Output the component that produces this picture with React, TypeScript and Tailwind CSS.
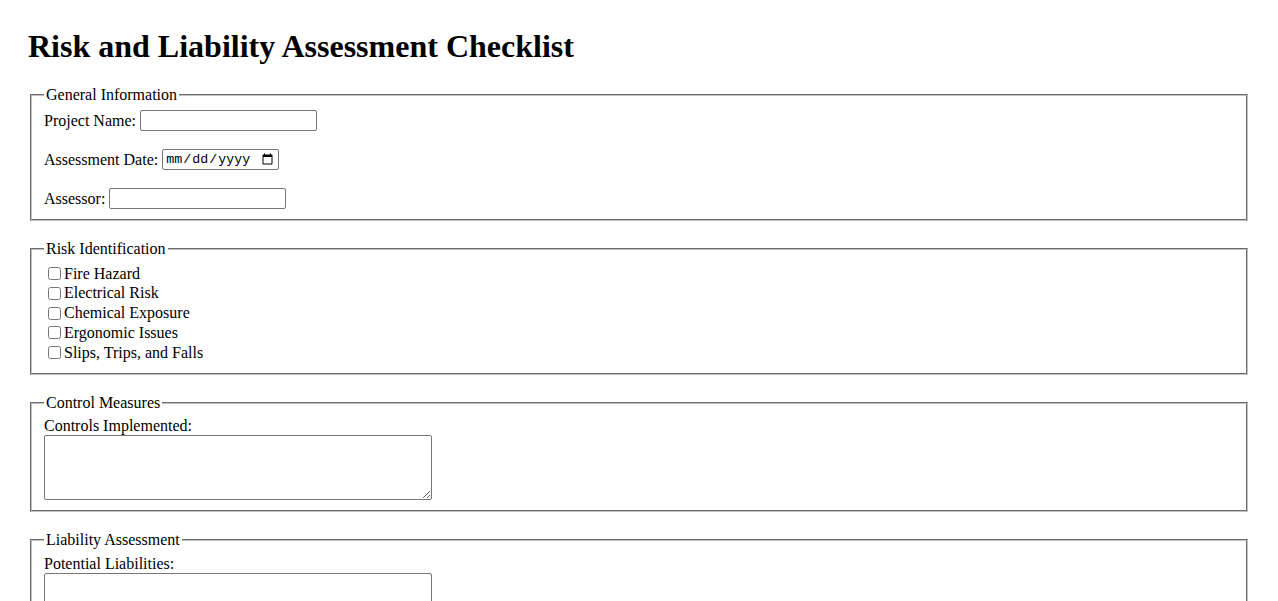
import React from "react";

export default function App() {
  return (
    <div className="min-h-screen bg-white px-7 pt-7 pb-7 font-['Liberation_Serif',serif] text-base leading-[normal] text-black">
      <h1 className="mb-[21.44px] text-[32px] font-bold">Risk and Liability Assessment Checklist</h1>

      <form>
        {/* General info */}
        <Section title="General Information">
          <Field label="Project Name:" className="mb-[18px]">
            <TextInput />
          </Field>
          <Field label="Assessment Date:" className="mb-[18px]">
            <input
              type="date"
              className="h-[21px] w-[117px] rounded-[2px] border border-[#767676] bg-white px-[2px] py-[1px] font-['Liberation_Mono',monospace] text-[13.33px]"
            />
          </Field>
          <Field label="Assessor:">
            <TextInput />
          </Field>
        </Section>

        {/* Risks */}
        <Section title="Risk Identification">
          <Check label="Fire Hazard" />
          <Check label="Electrical Risk" />
          <Check label="Chemical Exposure" />
          <Check label="Ergonomic Issues" />
          <Check label="Slips, Trips, and Falls" />
        </Section>

        <Section title="Control Measures">
          <label className="block">Controls Implemented:</label>
          <Area />
        </Section>

        <Section title="Liability Assessment">
          <label className="block">Potential Liabilities:</label>
          <Area />
        </Section>

        <Section title="Recommendations">
          <label className="block">Recommended Actions:</label>
          <Area />
        </Section>
      </form>
    </div>
  );
}

function Section({ title, children }: { title: string; children: React.ReactNode }) {
  return (
    <fieldset className="mx-[2px] mb-[19px] border-2 border-[rgb(192,192,192)] px-3 pt-[5.6px] pb-[10px] [border-style:groove]">
      <legend className="px-[2px]">{title}</legend>
      {children}
    </fieldset>
  );
}

function Field({
  label,
  className,
  children,
}: {
  label: string;
  className?: string;
  children: React.ReactNode;
}) {
  return (
    <div className={`flex h-[21px] items-center gap-[4px] ${className ?? ""}`}>
      <label>{label}</label>
      {children}
    </div>
  );
}

function TextInput() {
  return (
    <input
      type="text"
      className="h-[21px] w-[177px] rounded-[2px] border border-[#767676] bg-white px-[2px] py-[1px] font-['Liberation_Sans',sans-serif] text-[13.33px]"
    />
  );
}

function Check({ label }: { label: string }) {
  return (
    <label className="flex h-[19.8px] items-center">
      <input type="checkbox" className="m-[3px_3px_3px_4px] h-[13px] w-[13px]" />
      <span>{label}</span>
    </label>
  );
}

function Area() {
  return (
    <textarea className="block h-[65px] w-[388px] rounded-[2px] border border-[#767676] bg-white px-[2px] py-[2px] font-['Liberation_Mono',monospace] text-[13.33px]" />
  );
}
